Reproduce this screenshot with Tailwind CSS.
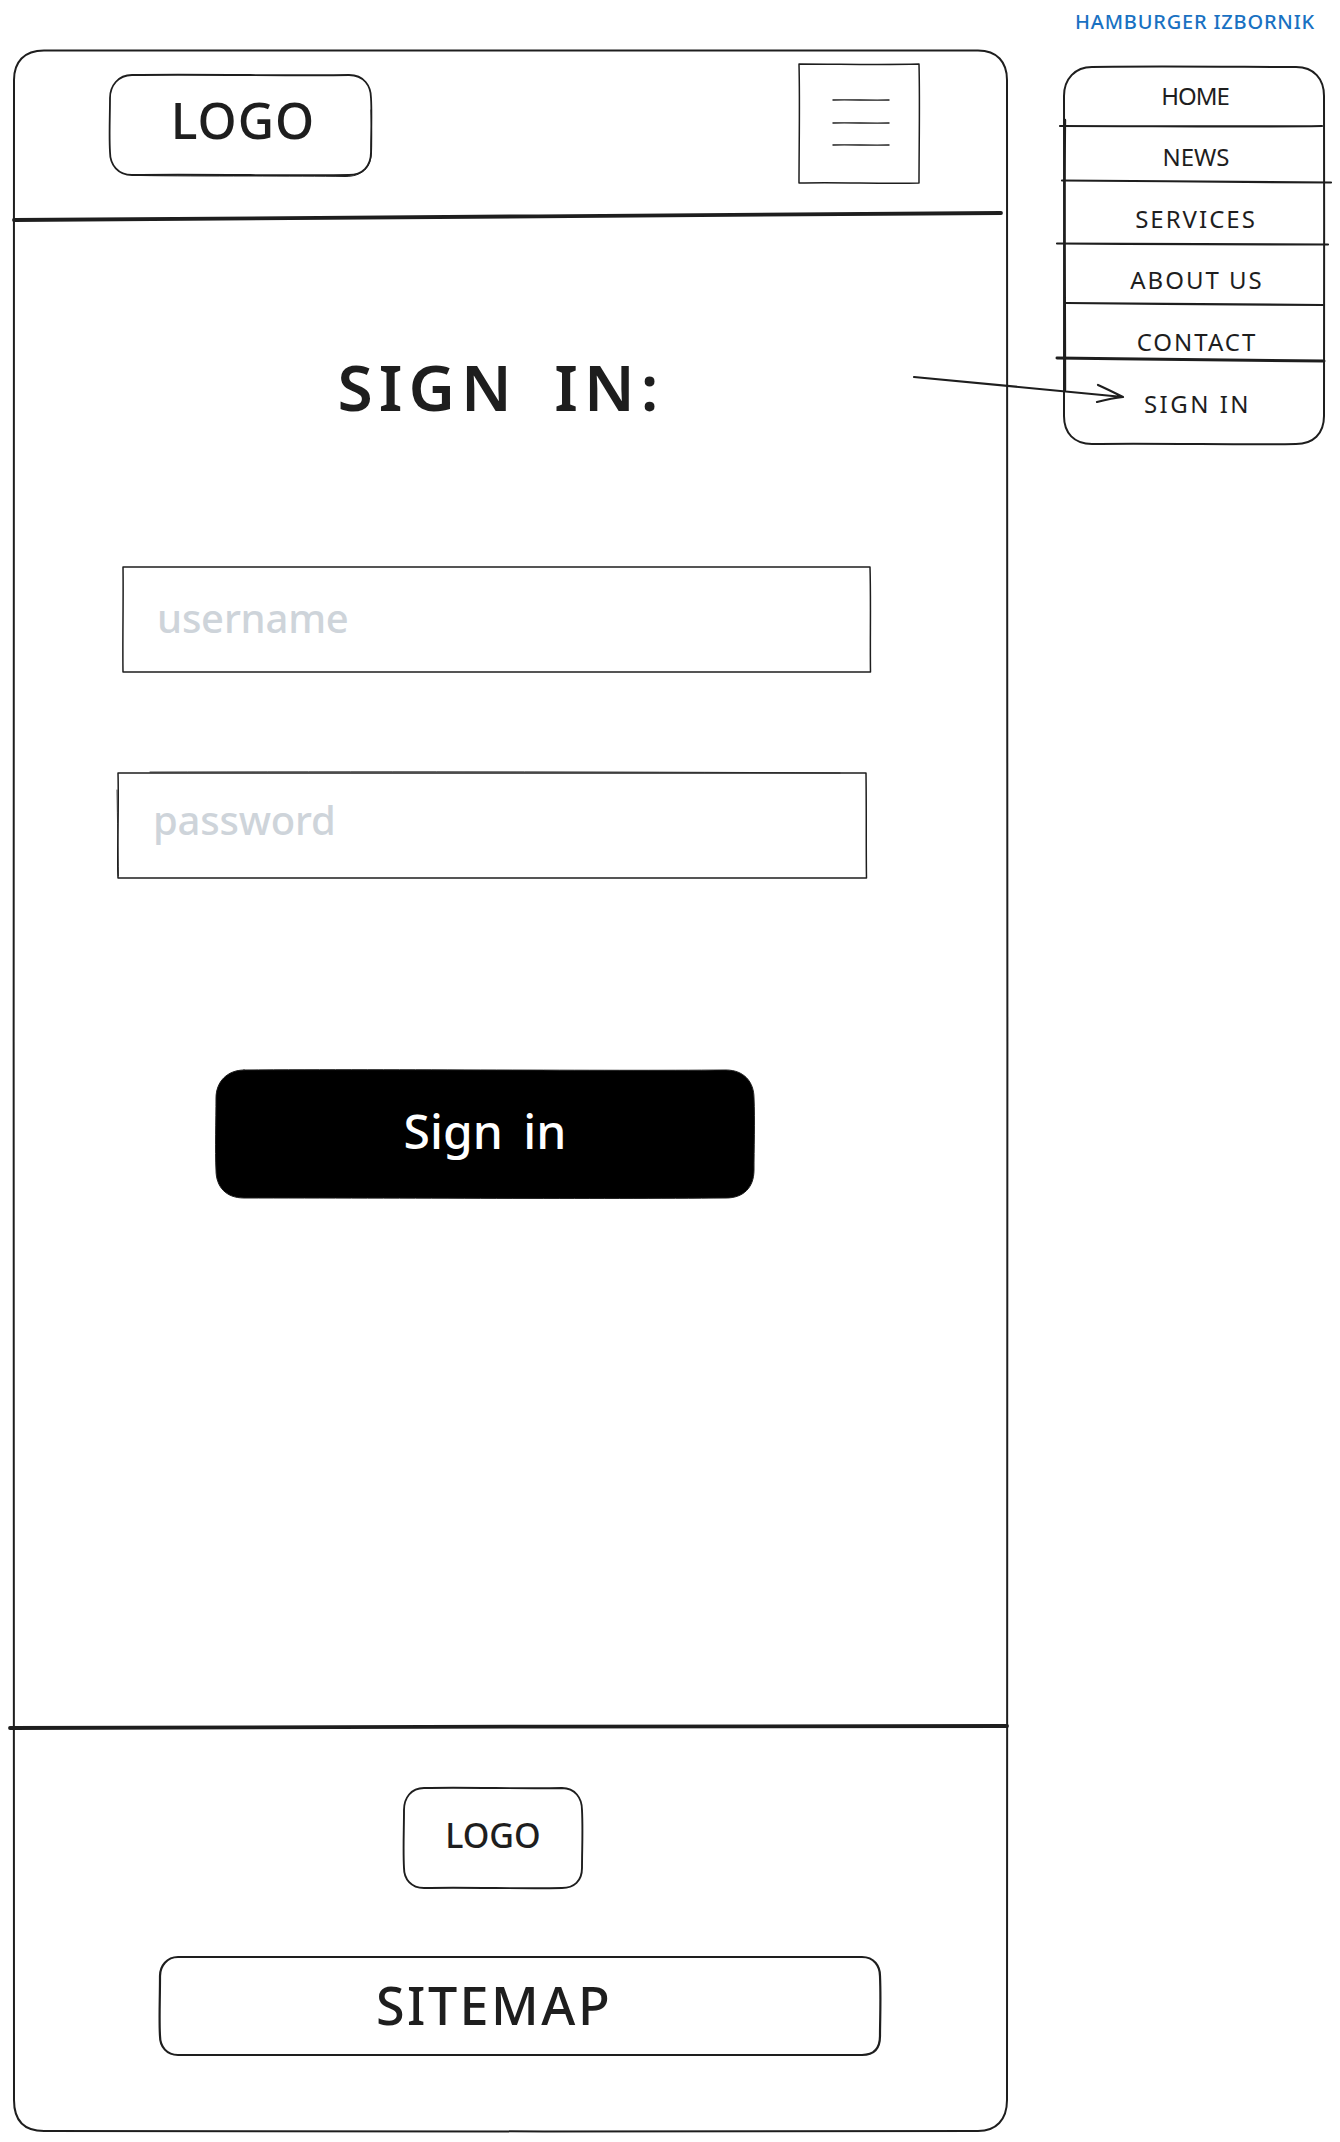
<!DOCTYPE html>
<html lang="en">
<head>
<meta charset="utf-8">
<title>Sign in wireframe</title>
<script src="https://cdn.jsdelivr.net/npm/@tailwindcss/browser@4"></script>
</head>
<body class="bg-white">
<main class="relative w-[1340px] h-[2142px] overflow-hidden bg-white font-['Noto_Sans',sans-serif] text-[#1e1e1e]">
  <svg class="absolute inset-0 w-[1340px] h-[2142px]" viewBox="0 0 1340 2142" fill="none" stroke="#1e1e1e" stroke-linecap="round" stroke-linejoin="round">
    <!-- black button -->
    <path fill="#000" stroke-width="1" d="M244 1070 C400 1069 600 1071 726 1070 C744 1070 754 1082 754 1098 C755 1120 754 1150 754 1170 C754 1188 743 1198 726 1198 C600 1199 400 1198 244 1198 C226 1198 216 1187 216 1170 C215 1150 216 1120 216 1098 C216 1082 227 1070 244 1070 Z"/>
    <!-- outer frame -->
    <path stroke-width="2" d="M44 50.5 C350 50 700 51 978 50.5 C997 50.5 1007 62 1007 80 C1008 700 1007 1500 1007 2100 C1007 2120 996 2131 978 2131 C700 2132 300 2131 44 2131 C24 2131 14 2120 14 2100 C13 1500 14 700 14 80 C14 62 24 50.5 44 50.5 Z"/>
    <path stroke-width="3.800" d="M14 220 C300 217 700 216 1001 213"/>
    <path stroke-width="3.800" d="M10 1728 C300 1727 700 1726 1007 1726"/>
    <!-- header logo -->
    <path stroke-width="1.800" d="M132 75 C200 74 300 76 349 75 C364 75 371 86 371 98 C372 115 371 135 371 152 C371 167 362 175 349 175 C300 176 200 174 132 175 C118 175 110 165 110 152 C109 135 110 115 110 98 C110 86 118 75 132 75 Z"/>
    <path stroke-width="1" d="M371 110 C371.500 125 372 140 371.500 152 C371 168 362 176.500 345 176.500 C300 175.500 200 176.500 140 175.500"/>
    <!-- hamburger -->
    <path stroke-width="1.500" d="M799 64 C840 64 880 65 919 64 C920 100 919 150 919 183 C880 184 840 182 799 183 C799 150 800 100 799 64 Z"/>
    <path stroke-width="1.400" d="M833 100 C850 99.500 870 100.500 889 100 M833 123 C850 122.500 870 123.500 889 123 M833 145 C850 144.500 870 145.500 889 145"/>
    <!-- arrow -->
    <path stroke-width="2.200" d="M914 377 C980 383 1050 390 1123 397 M1098 385 C1107 389 1115 393 1123 397 C1114 398 1105 400 1097 402"/>
    <!-- menu -->
    <path stroke-width="2" d="M1092 67 C1150 66 1250 67 1296 67 C1314 67 1324 79 1324 96 C1325 200 1323 320 1324 416 C1324 434 1313 444 1296 444 C1250 445 1150 443 1092 444 C1074 444 1064 433 1064 416 C1063 320 1065 200 1064 96 C1064 79 1075 67 1092 67 Z"/>
    <path stroke-width="2.400" d="M1065 120 C1064 200 1065 300 1065 390"/>
    <path stroke-width="2.200" d="M1060 126 C1150 126 1250 127 1322 126"/>
    <path stroke-width="2.200" d="M1062 180.500 C1150 181 1250 182 1331 182.500"/>
    <path stroke-width="2.200" d="M1057 243.500 C1150 244 1250 244 1328 244.500"/>
    <path stroke-width="2.200" d="M1066 303 C1150 304 1250 304 1323 305"/>
    <path stroke-width="3" d="M1057 358 C1150 359 1250 360 1324 361"/>
    <!-- inputs -->
    <path stroke-width="1.500" d="M123 567 C350 566 650 568 870 567 C871 600 870 640 870.500 672 C650 673 350 671 123 672 C122.500 640 123.500 600 123 567 Z"/>
    <path stroke-width="1.500" d="M118 773 C350 772 650 774 866 773 C866.500 810 866 850 866.500 878 C650 879 350 877 118 878 C117 850 119 810 118 773 Z"/>
    <path stroke-width="0.800" d="M150 772 C350 771.500 600 771.500 840 773 M117 790 C117.500 820 118 850 118.500 876"/>
    <!-- footer -->
    <path stroke-width="1.900" d="M424 1788 C470 1787 520 1789 562 1788 C575 1788 582 1798 582 1810 C583 1830 582 1850 582 1868 C582 1881 574 1888 562 1888 C520 1889 470 1887 424 1888 C411 1888 404 1879 404 1868 C403 1850 404 1830 404 1810 C404 1798 411 1788 424 1788 Z"/>
    <path stroke-width="2.200" d="M178 1957 C350 1956 700 1958 862 1957 C874 1957 880 1966 880 1976 C881 2000 880 2020 880 2036 C880 2048 874 2055 862 2055 C700 2056 350 2054 178 2055 C167 2055 160 2047 160 2036 C159 2020 160 2000 160 1976 C160 1966 167 1957 178 1957 Z"/>
  </svg>

  <div class="absolute left-[1060px] top-[12px] w-[270px] h-[20px] flex items-center justify-center text-[#1971c2] text-[20px] font-medium leading-none tracking-[0.800px] whitespace-nowrap">HAMBURGER IZBORNIK</div>

  <div class="absolute left-[110px] top-[96px] w-[266px] h-[48px] flex items-center justify-center text-[50px] font-medium leading-none tracking-[1px] whitespace-nowrap">LOGO</div>
  <h1 class="absolute left-[300px] top-[357px] w-[402px] h-[60px] flex items-center justify-center text-[64px] font-semibold leading-none tracking-[6px] [word-spacing:14px] whitespace-nowrap">SIGN IN:</h1>

  <div class="absolute left-[1100px] top-[85px] w-[190px] h-[22px] flex items-center justify-center text-[24px] leading-none tracking-[-1px] whitespace-nowrap">HOME</div>
  <div class="absolute left-[1100px] top-[146px] w-[192px] h-[22px] flex items-center justify-center text-[24px] leading-none whitespace-nowrap">NEWS</div>
  <div class="absolute left-[1100px] top-[208px] w-[192px] h-[22px] flex items-center justify-center text-[24px] leading-none tracking-[2px] whitespace-nowrap">SERVICES</div>
  <div class="absolute left-[1100px] top-[269px] w-[194px] h-[22px] flex items-center justify-center text-[24px] leading-none tracking-[2px] whitespace-nowrap">ABOUT US</div>
  <div class="absolute left-[1100px] top-[331px] w-[194px] h-[22px] flex items-center justify-center text-[24px] leading-none tracking-[2px] whitespace-nowrap">CONTACT</div>
  <div class="absolute left-[1100px] top-[393px] w-[195px] h-[22px] flex items-center justify-center text-[24px] leading-none tracking-[2.500px] whitespace-nowrap">SIGN IN</div>

  <div class="absolute left-[157px] top-[594px] text-[#ced4da] text-[40px] font-medium leading-[48px] tracking-[-0.200px] whitespace-nowrap">username</div>
  <div class="absolute left-[153px] top-[796px] text-[#ced4da] text-[40px] font-medium leading-[48px] tracking-[-0.200px] whitespace-nowrap">password</div>

  <div class="absolute left-[216px] top-[1106px] w-[538px] h-[50px] flex items-center justify-center text-white text-[48px] font-medium leading-none [word-spacing:8px] whitespace-nowrap">Sign in</div>

  <div class="absolute left-[404px] top-[1821px] w-[178px] h-[28px] flex items-center justify-center text-[34px] font-medium leading-none whitespace-nowrap">LOGO</div>
  <div class="absolute left-[300px] top-[1983px] w-[388px] h-[44px] flex items-center justify-center text-[52px] font-medium leading-none tracking-[2.500px] whitespace-nowrap">SITEMAP</div>
</main>
</body>
</html>
